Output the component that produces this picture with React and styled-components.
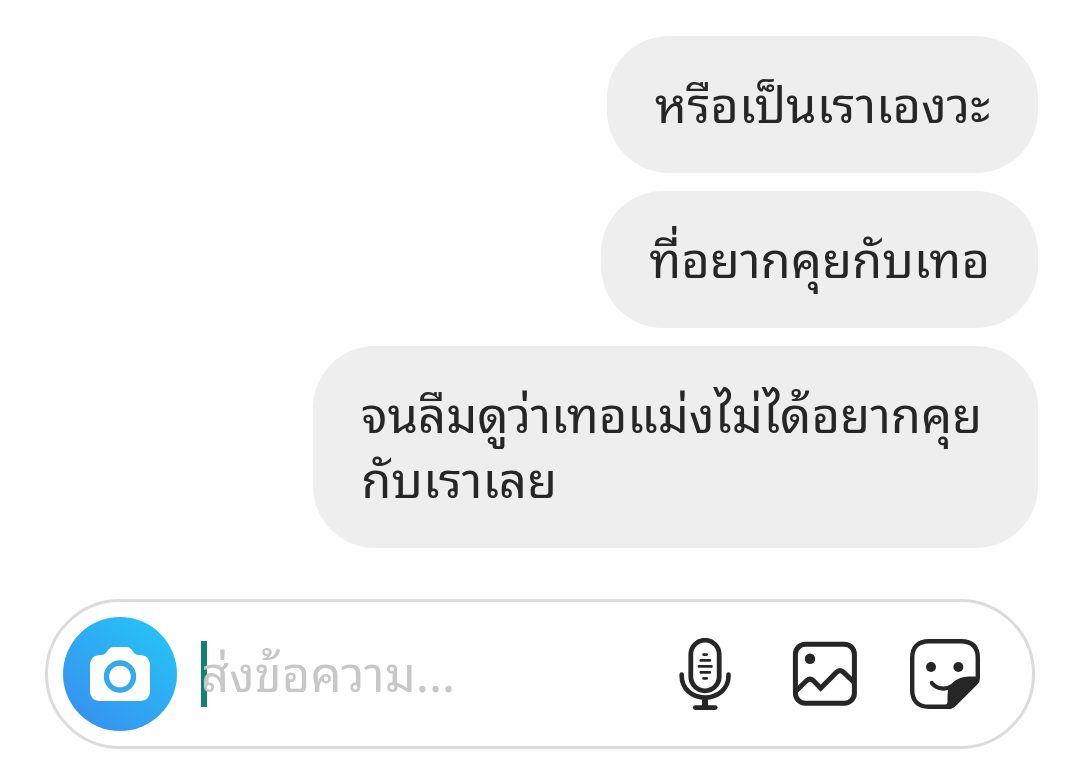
import React, { useState } from 'react';
import styled, { createGlobalStyle } from 'styled-components';

const GlobalStyle = createGlobalStyle`
  * {
    box-sizing: border-box;
  }

  body {
    margin: 0;
    background: #fefefe;
    color: #262626;
    font-family: 'Noto Sans Thai Looped', 'Noto Sans', sans-serif;
  }
`;

const Chat = styled.main`
  display: flex;
  flex-direction: column;
  gap: 51px;
  padding: 36px 45px 32px;
`;

const Messages = styled.ul`
  display: flex;
  flex-direction: column;
  align-items: flex-end;
  gap: 18px;
  margin: 0 -3px 0 0;
  padding: 0;
  list-style: none;
`;

const Bubble = styled.li`
  max-width: 73%;
  padding: 33px 48px 39px;
  border-radius: 62px;
  background: #eeeeee;
  font-size: 49px;
  line-height: 65px;
`;

const Composer = styled.form`
  display: flex;
  align-items: center;
  height: 150px;
  padding: 0 51px 0 15px;
  border: 3px solid #dbdbdb;
  border-radius: 75px;
  background: #fff;
`;

const IconButton = styled.button`
  flex: none;
  width: ${({ $size }) => $size || 72}px;
  height: ${({ $size }) => $size || 72}px;
  padding: 0;
  border: 0;
  border-radius: ${({ $round }) => ($round ? '50%' : '0')};
  background: ${({ $round }) =>
    $round ? 'linear-gradient(40deg, #3890f0 8%, #27bff5 85%)' : 'none'};
  color: #262626;
  cursor: pointer;

  svg {
    display: block;
    width: 100%;
    height: 100%;
  }
`;

const Field = styled.div`
  display: flex;
  flex: 1;
  min-width: 0;
  height: 66px;
  margin: 0 24px;
  background: linear-gradient(#0f8272, #0f8272) left / 6px 100% no-repeat;
`;

const TextInput = styled.input`
  width: 100%;
  padding: 0 0 8px;
  border: 0;
  outline: 0;
  background: transparent;
  color: #262626;
  caret-color: #0f8272;
  font-family: inherit;
  font-size: 49px;
  line-height: 65px;

  &::placeholder {
    color: #c7c7c7;
    opacity: 1;
  }
`;

const Actions = styled.div`
  display: flex;
  gap: 48px;
`;

const CameraIcon = () => (
  <svg viewBox="0 0 114 114" aria-hidden="true">
    <path
      fill="#fff"
      d="M37 38 C42 38 43 36 45 33 C47 31 48 30 51 30 H63 C66 30 67 31 69 33 C71 36 72 38 77 38 C83 38 87 42 87 48 V74 C87 80 83 84 77 84 H37 C31 84 27 80 27 74 V48 C27 42 31 38 37 38 Z"
    />
    <circle cx="57" cy="59.5" r="13.5" fill="#fff" stroke="#36a9ec" strokeWidth="5.4" />
  </svg>
);

const MicIcon = () => (
  <svg viewBox="0 0 72 72" fill="none" stroke="currentColor" strokeLinecap="round" aria-hidden="true">
    <rect x="21.8" y="2.2" width="28.4" height="50.6" rx="14.2" strokeWidth="4.8" />
    <path d="M12.7 36.5 V38 C12.7 50.5 23 59.5 36 59.5 C49 59.5 59.5 50.5 59.5 38 V36.5" strokeWidth="4.6" />
    <path d="M36 60 V69" strokeWidth="6" strokeLinecap="butt" />
    <path d="M26.3 69.6 H46.2" strokeWidth="4.8" />
    <path d="M34.6 16.6 H37.6 M31.8 22.4 H40.8 M30 28.4 H42.4 M31.8 34.4 H40.8 M34.6 40.4 H37.6" strokeWidth="2.8" />
  </svg>
);

const GalleryIcon = () => (
  <svg viewBox="0 0 72 72" fill="none" stroke="currentColor" strokeWidth="5" aria-hidden="true">
    <rect x="6.4" y="6.2" width="59" height="59" rx="10" />
    <circle cx="21" cy="20.8" r="5.2" fill="currentColor" stroke="none" />
    <path d="M7 53 L17.5 42.8 Q21 39.6 24.5 42.8 L31.7 50.2 L47.3 34.4 Q51 30.9 54.7 34.4 L65.5 44.8" />
  </svg>
);

const StickerIcon = () => (
  <svg viewBox="0 0 72 72" fill="none" stroke="currentColor" strokeWidth="4.4" aria-hidden="true">
    <path d="M42 68.8 H20 C9 68.8 3.2 63 3.2 52 V20 C3.2 9 9 3.2 20 3.2 H52 C63 3.2 68.8 9 68.8 20 V41" />
    <path
      fill="currentColor"
      stroke="none"
      d="M71 38.5 H61 C51 38.7 45 42.5 41 47.5 C39 51 38.5 54 38.5 58.5 V63 C38.5 65.5 38 66.5 36 67 V71 H40 C43 71 45 69.8 47 67.8 L68.5 46.3 C70.5 44.3 71 42 71 38.5 Z"
    />
    <path d="M22.8 45 C28 51.5 37 52 43 48" strokeLinecap="round" strokeWidth="4.2" />
    <circle cx="22" cy="29" r="5" fill="currentColor" stroke="none" />
    <circle cx="49.4" cy="29" r="5" fill="currentColor" stroke="none" />
  </svg>
);

const messages = [
  'หรือเป็นเราเองวะ',
  'ที่อยากคุยกับเทอ',
  'จนลืมดูว่าเทอแม่งไม่ได้อยากคุยกับเราเลย',
];

const App = () => {
  const [text, setText] = useState('');

  return (
    <>
      <GlobalStyle />
      <Chat lang="th">
        <Messages>
          {messages.map((message) => (
            <Bubble key={message}>{message}</Bubble>
          ))}
        </Messages>
        <Composer onSubmit={(e) => e.preventDefault()}>
          <IconButton type="button" aria-label="กล้อง" $size={114} $round>
            <CameraIcon />
          </IconButton>
          <Field>
            <TextInput
              type="text"
              aria-label="ส่งข้อความ"
              placeholder="ส่งข้อความ..."
              value={text}
              onChange={(e) => setText(e.target.value)}
            />
          </Field>
          <Actions>
            <IconButton type="button" aria-label="ไมโครโฟน">
              <MicIcon />
            </IconButton>
            <IconButton type="button" aria-label="รูปภาพ">
              <GalleryIcon />
            </IconButton>
            <IconButton type="button" aria-label="สติกเกอร์">
              <StickerIcon />
            </IconButton>
          </Actions>
        </Composer>
      </Chat>
    </>
  );
};

export default App;
